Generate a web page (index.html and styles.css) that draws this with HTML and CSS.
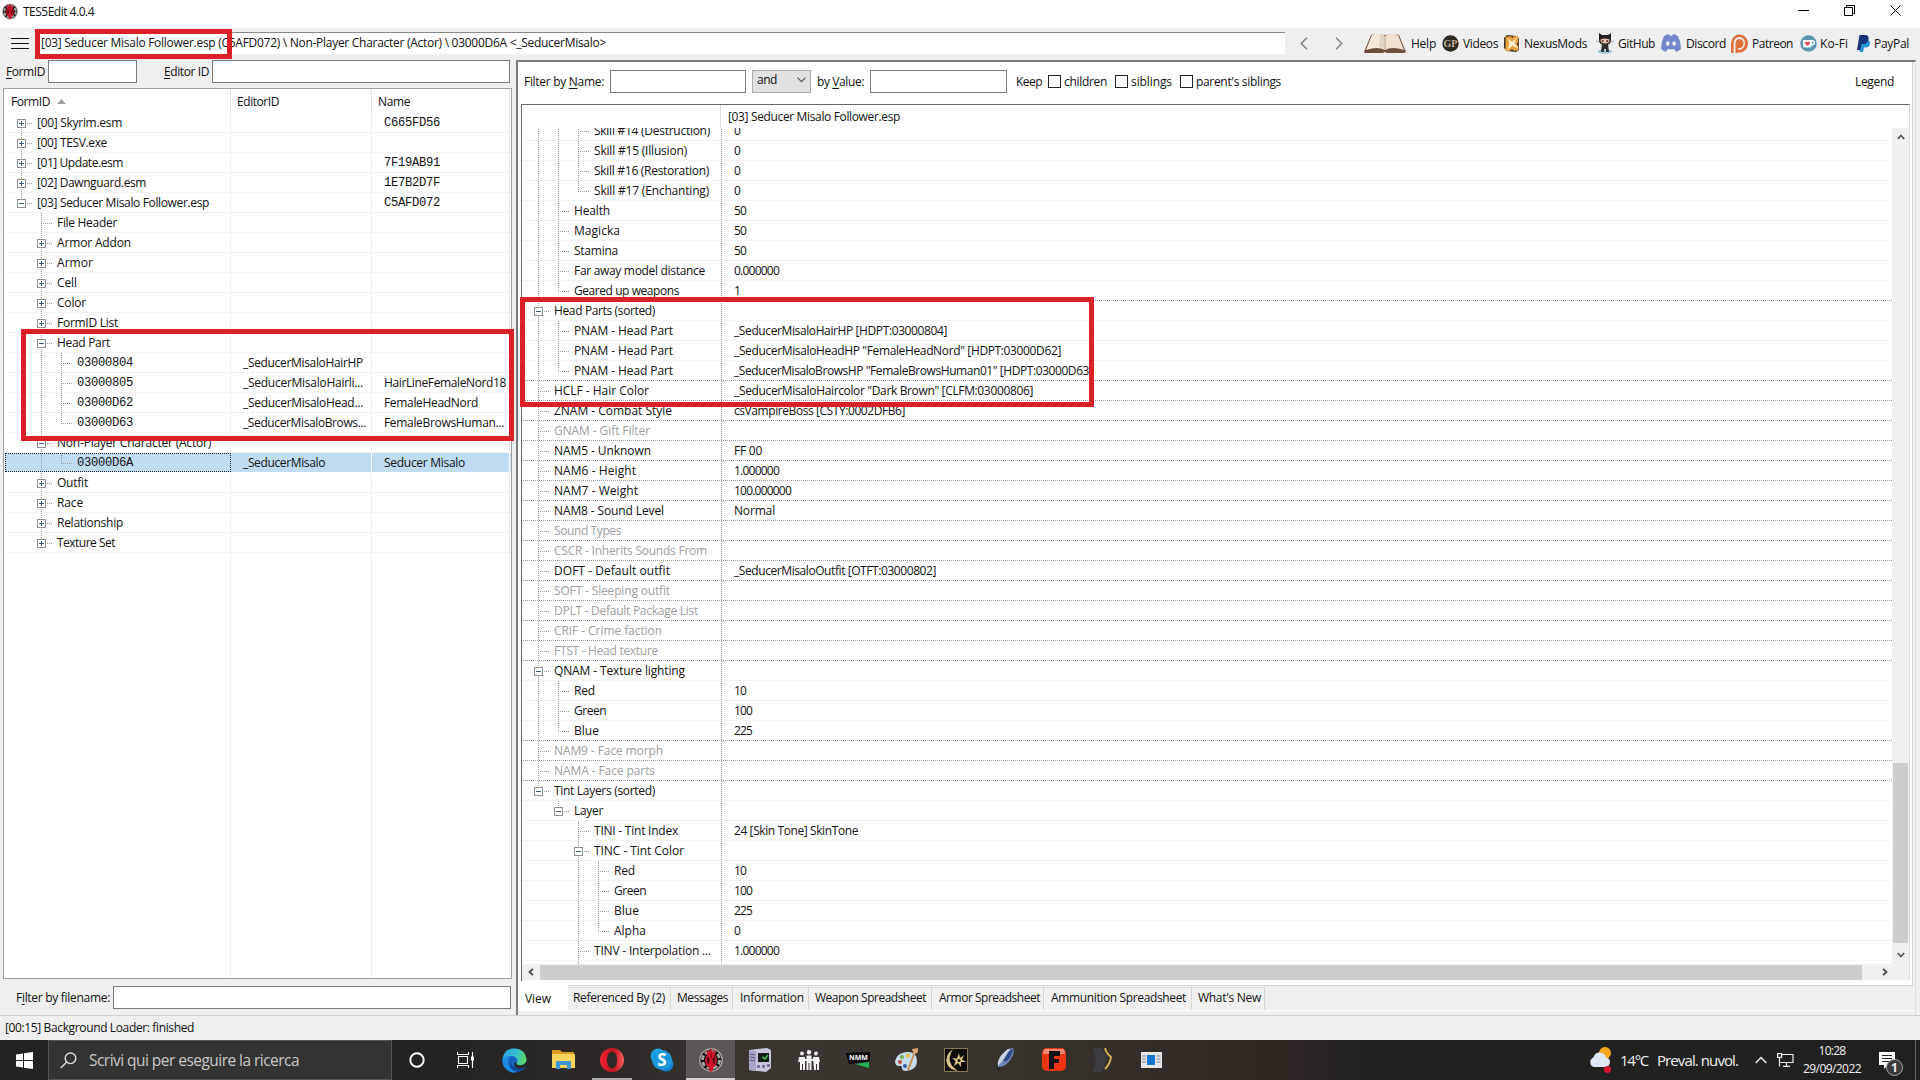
FILE: index.html
```html
<!DOCTYPE html>
<html lang="en">
<head>
<meta charset="utf-8">
<title>TES5Edit 4.0.4</title>
<link rel="stylesheet" href="styles.css">
</head>
<body>
<div class="window">
  <header class="titlebar">
    <svg class="app-icon" width="16" height="17" viewBox="0 0 24 24"><use href="#dragon"/></svg>
    <span data-w="71">TES5Edit 4.0.4</span>
    <div class="win-buttons">
      <svg width="11" height="11"><path d="M0 5.5h11" stroke="#000"/></svg>
      <svg width="11" height="11"><path d="M.5 2.5h8v8h-8zM2.5 2.5v-2h8v8h-2" fill="none" stroke="#000"/></svg>
      <svg width="11" height="11"><path d="M.5 .5l10 10M10.5 .5l-10 10" stroke="#000"/></svg>
    </div>
  </header>

  <div class="toolbar">
    <div class="burger"><i></i><i></i><i></i></div>
    <div class="address"><span data-w="565">[03] Seducer Misalo Follower.esp (C5AFD072) \ Non-Player Character (Actor) \ 03000D6A &lt;_SeducerMisalo&gt;</span></div>
    <div class="nav">
      <svg width="8" height="13"><path d="M7 .8L1.2 6.5 7 12.2" fill="none" stroke="#777" stroke-width="1.3"/></svg>
      <svg width="8" height="13"><path d="M1 .8L6.8 6.5 1 12.2" fill="none" stroke="#777" stroke-width="1.3"/></svg>
    </div>
    <nav class="links">
      <a class="l-help"><svg width="44" height="22" viewBox="0 0 44 22"><path d="M1 20L8 3l3-1 11 1 11-1 3 1 7 17-2 1H24l-2-1-2 1H2z" fill="#6f4f3c"/><path d="M3 18L9 3q7-3 13 1v14q-7-4-19 0z" fill="#f5e9dc"/><path d="M41 18L35 3q-7-3-13 1v14q7-4 19 0z" fill="#f1e0d0"/><path d="M22 4v14" stroke="#b89b83"/><path d="M17 3q4 0 5 2v12q-2-2-6-2z" fill="#d9c3b0" opacity=".6"/></svg><span data-w="25">Help</span></a>
      <a class="l-videos"><svg width="17" height="17" viewBox="0 0 17 17"><circle cx="8.5" cy="8.5" r="8.2" fill="#2e2822"/><text x="8.5" y="12" text-anchor="middle" font-size="10" font-weight="700" fill="#c9b793" class="serif">GP</text></svg><span data-w="35">Videos</span></a>
      <a class="l-nexus"><svg width="16" height="17" viewBox="0 0 16 17"><path d="M3 0L13 1l2 3v11l-3 2-9-1-3-3V3z" fill="#3c3326"/><path d="M1.500 1.500L14 1l.5 14.500-13 .5z" fill="#e9a13b"/><path d="M4 3l4 4 5-5-2.500 6 4 6-6-3.500-5 4.500 2-6.500z" fill="#fdf0d2"/><path d="M7 1l1.500 2L10 1zM0 8l2 1-2 2zM14 7v4l-1.500-2zM6 16l2-2 2 2z" fill="#3c3326"/></svg><span data-w="63">NexusMods</span></a>
      <a class="l-github"><svg width="18" height="22" viewBox="0 0 18 22"><path d="M3 1l3 2h6l3-2v7q0 5-6 5T3 8z" fill="#24211f"/><path d="M4.500 7.500q4.500-2 9 0 .5 4-4.500 4t-4.500-4z" fill="#e8c3ab"/><path d="M0 9l4 1M18 9l-4 1" stroke="#777" stroke-width=".6"/><ellipse cx="9" cy="19.500" rx="7" ry="2.300" fill="#9cc7dd"/><path d="M6 12h6l1 8h-3v-3H8v3H5z" fill="#33302e"/><circle cx="6.700" cy="9" r="1" fill="#5b3228"/><circle cx="11.300" cy="9" r="1" fill="#5b3228"/></svg><span data-w="37">GitHub</span></a>
      <a class="l-discord"><svg width="20" height="18" viewBox="0 0 20 16" preserveAspectRatio="none"><path d="M3 2Q5 .5 8 0l.7 1.500h2.600L12 0q3 .5 5 2 3 5 3 11-2 2-5 3l-1.500-2.500h-7L5 16q-3-1-5-3Q0 7 3 2z" fill="#7487cb"/><ellipse cx="6.800" cy="8.500" rx="1.800" ry="2" fill="#efefef"/><ellipse cx="13.200" cy="8.500" rx="1.800" ry="2" fill="#efefef"/></svg><span data-w="40">Discord</span></a>
      <a class="l-patreon"><svg width="17" height="19" viewBox="0 0 17 17" preserveAspectRatio="none"><path d="M0 17V8a8.500 8 0 1 1 8.500 8.500q-2 0-3.500-.8v-2.500Q6.500 14 8.500 14A5.700 5.700 0 1 0 2.600 8v9z" fill="#e0703a"/><path d="M4.500 17V8.500a4 4 0 1 1 4 4q-1 0-1.500-.3V17z" fill="#e0703a"/></svg><span data-w="41">Patreon</span></a>
      <a class="l-kofi"><svg width="17" height="17" viewBox="0 0 17 17"><circle cx="8.500" cy="8.500" r="8.300" fill="#5a96b0"/><path d="M3 5h9q3 0 3 2.700T12 10.500q-.5 2-2 2H5q-2 0-2-2z" fill="#fff"/><path d="M12 6.500v2.500q1.500 0 1.500-1.200T12 6.500z" fill="#5a96b0"/><path d="M7.500 11L5 8.300Q4.800 6.500 6.300 6.400q.8 0 1.200.8.500-.8 1.300-.8 1.500.2 1.200 1.900z" fill="#e9474b"/></svg><span data-w="28">Ko-Fi</span></a>
      <a class="l-paypal"><svg width="13" height="17" viewBox="0 0 13 17"><path d="M4 5h6q3 0 3 3 0 4.500-5 4.500H7L6 17H2.500z" fill="#2297d8"/><path d="M2.500 0H8q4 0 3.600 4Q11 9 6 9H4.500l-1 6H0z" fill="#18337d"/></svg><span data-w="35">PayPal</span></a>
    </nav>
  </div>

  <main class="main">
    <section class="left">
      <div class="id-filters">
        <label data-w="39"><u>F</u>ormID</label><div class="input in-form"></div>
        <label class="lab-editor" data-w="45"><u>E</u>ditor ID</label><div class="input in-editor"></div>
      </div>
      <div class="nav-panel">
        <div class="nav-head">
          <div class="c1"><span data-w="39">FormID</span><svg width="9" height="5"><path d="M0 5L4.500 0 9 5z" fill="#a0a0a0"/></svg></div>
          <div class="c2"><span data-w="42">EditorID</span></div>
          <div class="c3"><span data-w="32">Name</span></div>
        </div>
        <div class="nav-body" id="nav"></div>
      </div>
      <div class="file-filter"><label data-w="94">F<u>i</u>lter by filename:</label><div class="input in-file"></div></div>
    </section>

    <section class="right">
      <div class="pane">
        <div class="view-filter">
          <label data-w="80">Filter by <u>N</u>ame:</label><div class="input in-name"></div>
          <div class="select"><span data-w="20">and</span><svg width="9" height="6"><path d="M.5 .7l4 4 4-4" fill="none" stroke="#555" stroke-width="1.200"/></svg></div>
          <label data-w="47">by <u>V</u>alue:</label><div class="input in-value"></div>
          <label class="keep" data-w="26">Keep</label>
          <i class="check"></i><label data-w="43">children</label>
          <i class="check"></i><label data-w="41">siblings</label>
          <i class="check"></i><label data-w="85">parent's siblings</label>
          <label class="legend" data-w="39">Legend</label>
        </div>
        <div class="grid">
          <div class="grid-head"><div class="g1"></div><div class="g2"><span data-w="172">[03] Seducer Misalo Follower.esp</span></div></div>
          <div class="grid-main">
            <div class="grid-body"><div id="view"></div></div>
            <div class="vscroll">
              <svg width="8" height="6"><path d="M.8 5L4 1.500 7.200 5" fill="none" stroke="#505050" stroke-width="1.700"/></svg>
              <div class="vthumb"></div>
              <svg width="8" height="6"><path d="M.8 1L4 4.500 7.200 1" fill="none" stroke="#505050" stroke-width="1.700"/></svg>
            </div>
          </div>
          <div class="hscroll">
            <svg width="6" height="8"><path d="M5 .8L1.500 4 5 7.200" fill="none" stroke="#404040" stroke-width="1.700"/></svg>
            <div class="hthumb"></div>
            <svg width="6" height="8"><path d="M1 .8L4.500 4 1 7.200" fill="none" stroke="#404040" stroke-width="1.700"/></svg>
          </div>
        </div>
      </div>
      <div class="tabs">
        <div class="tab t-view"><span data-w="26">View</span></div>
        <div class="tab t-ref"><span data-w="92">Referenced By (2)</span></div>
        <div class="tab t-msg"><span data-w="51">Messages</span></div>
        <div class="tab t-info"><span data-w="64">Information</span></div>
        <div class="tab t-weap"><span data-w="111">Weapon Spreadsheet</span></div>
        <div class="tab t-arm"><span data-w="101">Armor Spreadsheet</span></div>
        <div class="tab t-ammo"><span data-w="135">Ammunition Spreadsheet</span></div>
        <div class="tab t-new"><span data-w="63">What's New</span></div>
      </div>
    </section>
  </main>

  <footer class="status"><span data-w="189">[00:15] Background Loader: finished</span></footer>
</div>

<div class="taskbar">
  <div class="start"><svg width="17" height="17" viewBox="0 0 17 17"><path d="M0 2.400L7 1.400V8H0zM8 1.200L17 0v8H8zM0 9h7v6.600L0 14.600zM8 9h9v8L8 15.800z" fill="#fff"/></svg></div>
  <div class="search"><svg width="17" height="17" viewBox="0 0 17 17"><circle cx="10.500" cy="6.300" r="5.300" fill="none" stroke="#ddd" stroke-width="1.400"/><path d="M6.700 10L.8 16" stroke="#ddd" stroke-width="1.400"/></svg><span data-w="210">Scrivi qui per eseguire la ricerca</span></div>
  <div class="apps">
    <div class="app"><svg width="16" height="16"><circle cx="8" cy="8" r="6.700" fill="none" stroke="#fff" stroke-width="1.900"/></svg></div>
    <div class="app"><svg width="17" height="16"><path d="M.5 0v3M.5 13v3M11.500 0v3M11.500 13v3M.5 2.500h11M.5 13.500h11M1.500 4.500h9v7h-9zM15.500 0v16" fill="none" stroke="#fff" stroke-width="1.100"/><path d="M14 4.500h3v4h-3z" fill="#fff"/></svg></div>
    <div class="app"><svg width="25" height="25" viewBox="0 0 25 25"><defs><linearGradient id="eg" x1="0" x2="1" y1=".3" y2=".5"><stop offset="0" stop-color="#2b9fe6"/><stop offset=".6" stop-color="#35c3c8"/><stop offset="1" stop-color="#62d85a"/></linearGradient></defs><circle cx="12.500" cy="12.500" r="12" fill="#1464c0"/><path d="M.6 11Q2 .5 12.500.5 23 .6 24.500 11q0 6-6.500 6.200-4 0-3.500-2 1.500-2 .5-4Q13 7.500 9 8 3 8.500.6 14z" fill="url(#eg)"/><path d="M9 8Q4 12 7 18q3 5 9 5.800Q10 26 5 22 0 18 .6 12 3 8 9 8z" fill="#1b8be0"/><path d="M10 10q-3 6 2 9 5 2 11-1l1 1-3 3-5 2Q8 22 8 16q0-4 2-6z" fill="#10489a"/><path d="M14.500 15.200q-.5 2 3.500 2 5 0 6.400-4.200.8 4-1.400 6-6 3-9.500 0-2-2-.5-5 1 .2 1.500 1.200z" fill="#2a2a28"/></svg></div>
    <div class="app"><svg width="23" height="20" viewBox="0 0 23 20"><path d="M0 1q0-1 1-1h7l2 2h12v5H0z" fill="#d99a1e"/><path d="M0 4h22q1 0 1 1v13H0z" fill="#fbd45e"/><path d="M4 19v-7q0-1 1-1h13q1 0 1 1v7h-4v-4H8v4z" fill="#3f94d2"/></svg></div>
    <div class="app open"><svg width="24" height="24" viewBox="0 0 24 24"><defs><linearGradient id="og" x1="0" x2="1"><stop offset="0" stop-color="#ef2230"/><stop offset=".6" stop-color="#c51522"/><stop offset="1" stop-color="#f5605f"/></linearGradient></defs><path d="M12 0a12 12 0 1 0 0 24 12 12 0 1 0 0-24zm0 3.500c3 0 5 4 5 8.500s-2 8.500-5 8.500-5-4-5-8.500 2-8.500 5-8.500z" fill="url(#og)" fill-rule="evenodd"/></svg></div>
    <div class="app"><svg width="24" height="24" viewBox="0 0 24 24"><circle cx="8" cy="8" r="7.500" fill="#1da1e2"/><circle cx="16" cy="16" r="7.500" fill="#1583cf"/><circle cx="12" cy="12" r="10" fill="#1a98dc"/><text x="12" y="18" text-anchor="middle" font-size="17" font-weight="700" fill="#fff">S</text></svg></div>
    <div class="app active"><svg width="24" height="24" viewBox="0 0 24 24"><g id="dragon"><circle cx="12" cy="12" r="11.200" fill="#15120f" stroke="#b9b4b1" stroke-width="1.200"/><circle cx="12" cy="12" r="8.600" fill="none" stroke="#a8a4a2" stroke-width="2.800" stroke-dasharray="4.500 2.250"/><path d="M12 0l1.500 4 3-2-.5 5 2 4-1 6-2.500 2-1 4-1.500 1-1.500-1-1-4L7 17l-1-6 2-4-.5-5 3 2z" fill="#d0142c"/><path d="M8 9l2.500 2L9 16zM16 9l-2.500 2 1.500 5zM12 5v5" fill="#4b0710" stroke="#4b0710" stroke-width=".6"/></g></svg></div>
    <div class="app"><svg width="24" height="24" viewBox="0 0 24 24"><path d="M1 2L19 0l4 2v18l-5 4-17-2z" fill="#c9c6e0"/><path d="M1 2l7 1v20l-7-1z" fill="#a9a6ca"/><path d="M2 6l5 1M2 9l5 1M2 12l5 1" stroke="#55506f"/><path d="M10 5h11v9H10z" fill="#152018"/><path d="M14 9l3 2 3-4" stroke="#48c34c" fill="none" stroke-width="1.500"/><path d="M9 17h3v3H9zM14 17h3v3h-3zM19 16h3v3h-3z" fill="#77739a"/></svg></div>
    <div class="app"><svg width="22" height="20" viewBox="0 0 22 20"><g fill="#f2f2f2"><circle cx="4" cy="3.500" r="2"/><circle cx="11" cy="2.300" r="2.200"/><circle cx="18" cy="3.500" r="2"/><path d="M1 7h6v13H5v-6H4v6H2v-8H0zM8.500 5.500h5V20h-2v-7h-1v7h-2zM15 7h6l1 5h-1v8h-2v-6h-1v6h-2zM6 9h3v2H6zM13 9h3v2h-3z"/></g></svg></div>
    <div class="app"><svg width="24" height="17" viewBox="0 0 24 17"><path d="M0 1l24-1v9l-21 3z" fill="#050505"/><path d="M9 12l14-2v6z" fill="#20b454"/><text x="12.500" y="8" text-anchor="middle" font-size="7" font-weight="700" fill="#fff">NMM</text></svg></div>
    <div class="app"><svg width="24" height="24" viewBox="0 0 24 24"><path d="M11 4Q22 3 22 13q0 9-11 10-4 0-4-3 0-3-3-2-4 0-4-5Q2 5 11 4z" fill="#c6dcea"/><circle cx="5" cy="14" r="2" fill="#c34a3c"/><circle cx="7" cy="9" r="2" fill="#72b04a"/><circle cx="13" cy="7.500" r="2" fill="#e6bd3e"/><circle cx="10" cy="18" r="2" fill="#375ea6"/><path d="M13 22l6-16" stroke="#c98c49" stroke-width="2"/><path d="M17 1l6-1 0 4-4 3z" fill="#d8a572"/></svg></div>
    <div class="app"><svg width="24" height="24" viewBox="0 0 24 24"><path d="M.5 .5h23v23H.5z" fill="#0c0a07" stroke="#8b7a50"/><path d="M9 1Q0 8 3 16q3 6 11 7Q5 17 5.500 10q1-5 3.500-9z" fill="#d9c486"/><path d="M15 5l1 5 4-3-2 4.500 4 2.500-5 0 0 5-3-4-4 3 1.500-5L8 10l5 .5z" fill="#d9c486"/><circle cx="15" cy="12.500" r="1.500" fill="#0c0a07"/></svg></div>
    <div class="app"><svg width="20" height="24" viewBox="0 0 20 24"><path d="M3 19L1 23l5-2z" fill="#222"/><path d="M3 19Q1 10 13 1l5-1q2 4-1 9-5 10-14 10z" fill="#6e87b8"/><path d="M8 12q3-7 9-11l1 1q-2 9-8 12z" fill="#2f4b8b"/><path d="M3 18q6-6 12-17l-2 0q-9 7-10 13z" fill="#c9d3e3"/></svg></div>
    <div class="app"><svg width="24" height="24" viewBox="0 0 24 24"><rect width="24" height="23" rx="5" fill="#ee3512"/><path d="M3 1h18q2 1 2 5H1q0-4 2-5z" fill="#f58b76"/><path d="M7 3h11v5h-6v3h5v4h-5v6H7z" fill="#111"/></svg></div>
    <div class="app"><svg width="24" height="24" viewBox="0 0 24 24"><path d="M2 0h9l5 9-5 15H2l3-12z" fill="#3c3d40"/><path d="M14 0q1 5 6 9-1 7-6 12" fill="none" stroke="#d9b356" stroke-width="1.800"/></svg></div>
    <div class="app"><svg width="21" height="16" viewBox="0 0 21 16"><path d="M0 0h21v16H0z" fill="#e4e6e8"/><path d="M6 3h8v10H6z" fill="#1177d1"/><path d="M1 4h4M1 7h4M1 10h4M15.500 4h4M15.500 7h4M15.500 10h4" stroke="#7e868f"/></svg></div>
  </div>
  <div class="tray">
    <svg class="weather" width="23" height="27" viewBox="0 0 23 27"><circle cx="16" cy="6" r="6" fill="#f6a81c"/><path d="M5 20a5 5 0 0 1-.5-9.500Q6 5 11 5.500q5 .5 6 5 4 .5 4 4.800-.5 4.700-5 4.700z" fill="#dfe7f7"/><circle cx="18.500" cy="22.500" r="3.600" fill="#d3152f"/></svg>
    <span class="temp" data-w="28">14°C</span><span class="cond" data-w="81">Preval. nuvol.</span>
    <svg class="chev" width="12" height="8"><path d="M.7 7L6 1.500 11.300 7" fill="none" stroke="#eee" stroke-width="1.400"/></svg>
    <svg class="net" width="17" height="14" viewBox="0 0 17 14"><path d="M5 1.500h11v8H3.500M9.500 10v3M6 13.300h7M.6.600h4v3.800h-4zM2.500 4.500v9" fill="none" stroke="#eee" stroke-width="1.200"/></svg>
    <div class="clock"><span data-w="27">10:28</span><span data-w="58">29/09/2022</span></div>
    <div class="note"><svg width="16" height="17" viewBox="0 0 16 17"><path d="M0 0h16v13H9l-4 4v-4H0z" fill="#fff"/><path d="M3 3.500h10M3 6.500h10M3 9.500h7" stroke="#222"/></svg><b class="badge">1</b></div>
    <i class="peek"></i>
  </div>
</div>

<div class="mark m-title"></div>
<div class="mark m-tree"></div>
<div class="mark m-view"></div>
<script src="app.js"></script>
</body>
</html>
```
FILE: styles.css
```css
* { box-sizing: border-box; }
body {
  margin: 0;
  width: 1920px;
  height: 1080px;
  overflow: hidden;
  position: relative;
  font: 12px/20px "Open Sans", "Noto Sans", sans-serif;
  color: #111;
  background: #efefef;
}
svg { display: block; flex: none; }
svg text { font-family: "Open Sans", sans-serif; }
svg text.serif { font-family: "Liberation Serif", serif; }
span, label { white-space: nowrap; display: block; flex: none; width: max-content; }
u { text-underline-offset: 2px; text-decoration-thickness: 1px; }

.window { height: 1040px; display: flex; flex-direction: column; }
.titlebar { height: 28px; flex: none; background: #fff; display: flex; align-items: flex-start; padding: 3px 19px 0 2px; }
.titlebar span { margin-left: 5px; line-height: 17px; }
.win-buttons { margin-left: auto; display: flex; gap: 35px; padding-top: 2px; }

.toolbar { height: 32px; flex: none; display: flex; padding-left: 11px; }
.burger { width: 18px; padding-top: 10px; display: flex; flex-direction: column; gap: 4px; }
.burger i { height: 1px; background: #111; }
.address { width: 1247px; height: 22px; margin: 4px 0 0 9px; background: #fff; border-top: 1px solid #8a8a8a; padding-left: 3px; line-height: 19px; }
.nav { display: flex; gap: 27px; margin-left: 15px; padding-top: 9px; }
.links { display: flex; height: 30px; align-items: center; margin-left: 20px; }
.links a { display: flex; align-items: center; }
.links span { line-height: 22px; padding-top: 1px; }
.l-help { gap: 4px; width: 79px; }
.l-videos { gap: 4px; width: 62px; }
.l-nexus { gap: 4px; width: 92px; }
.l-github { gap: 4px; width: 65px; }
.l-discord { gap: 5px; width: 70px; }
.l-patreon { gap: 4px; width: 69px; }
.l-kofi { gap: 3px; width: 57px; }
.l-paypal { gap: 4px; }

.main { display: flex; height: 955px; flex: none; }
.left { width: 516px; padding: 0 0 0 3px; flex: none; }
.input { background: #fff; border: 1px solid #7a7a7a; height: 23px; flex: none; }
.id-filters { display: flex; height: 28px; line-height: 24px; padding-left: 3px; }
.in-form { width: 89px; margin-left: 3px; }
.lab-editor { margin-left: 27px; }
.in-editor { width: 298px; margin-left: 3px; }
.nav-panel { width: 509px; height: 891px; background: #fff; border: 1px solid #a0a0a0; display: flex; flex-direction: column; }
.nav-head { display: flex; height: 24px; line-height: 26px; flex: none; }
.nav-head > div { border-right: 1px solid #e5e5e5; padding-left: 7px; }
.nav-head .c1 { width: 227px; display: flex; gap: 7px; }
.nav-head .c1 svg { margin-top: 10px; }
.nav-head .c2 { width: 141px; padding-left: 6px; }
.nav-head .c3 { width: 138px; padding-left: 6px; }
.nav-body { flex: 1; overflow: hidden; display: flex; flex-direction: column; }
.nav-body .fill { flex: 1; display: flex; }
.file-filter { display: flex; padding: 7px 0 0 13px; line-height: 24px; }
.in-file { width: 398px; margin-left: 3px; }

.row { display: flex; height: 20px; line-height: 20px; flex: none; }
.cell { display: flex; flex: none; }
.row .lvl { width: 20px; height: 20px; flex: none; display: flex; align-items: center; background-repeat: no-repeat;
  --v: repeating-linear-gradient(180deg, #999 0 1px, transparent 1px 2px);
  --h: repeating-linear-gradient(90deg, #999 0 1px, transparent 1px 2px); }
.lvl.through { background-image: var(--v); background-size: 1px 20px; background-position: 4px 0; }
.lvl.tee { background-image: var(--v), var(--h); background-size: 1px 20px, 12px 1px; background-position: 4px 0, 4px 10px; }
.lvl.last { background-image: var(--v), var(--h); background-size: 1px 10px, 12px 1px; background-position: 4px 0, 4px 10px; }
.lvl.first { background-image: var(--v), var(--h); background-size: 1px 10px, 12px 1px; background-position: 4px 10px, 4px 10px; }
.box { width: 9px; height: 9px; border: 1px solid #919191; margin-top: 1px;
  background: linear-gradient(#3b5a8c, #3b5a8c) center / 5px 1px no-repeat, #fff; }
.box.plus { background: linear-gradient(#3b5a8c, #3b5a8c) center / 5px 1px no-repeat, linear-gradient(#3b5a8c, #3b5a8c) center / 1px 5px no-repeat, #fff; }

.nav-body .row { border-bottom: 1px solid #f3f3f3; }
.nav-body .cell, .nav-body .fill div { border-right: 1px solid #f1f1f1; }
.nav-body .a, .fill .a { width: 227px; padding-left: 13px; }
.nav-body .b, .fill .b { width: 141px; padding-left: 12px; }
.nav-body .c, .fill .c { width: 138px; padding-left: 12px; border-right-color: #e5e5e5; }
.mono { font-family: "Liberation Mono", monospace; font-size: 12.2px; line-height: 20px; letter-spacing: -0.32px; }
.nav-body .row.sel { background: #bfdcf3; border-bottom-color: #fff; margin: 0 0 0 1px; }
.nav-body .row.sel .cell { border-right-color: #fff; }
.nav-body .row.sel .a { width: 226px; padding-left: 11px; border: 1px dotted #222; }
.nav-body .row.sel .lvl { margin-top: -1px; height: 18px; }
.nav-body .row.sel .mono { margin-top: -1px; }

.right { width: 1400px; flex: none; border-left: 2px solid #7b7b7b; border-top: 2px solid #7b7b7b; border-right: 1px solid #ddd; }
.pane { height: 924px; width: 1395px; background: #fff; border-right: 1px solid #d5d5d5; border-bottom: 1px solid #d5d5d5; }
.view-filter { height: 42px; display: flex; align-items: center; padding: 0 18px 4px 6px; }
.in-name { width: 136px; margin-left: 6px; }
.select { width: 59px; height: 23px; margin: 0 6px; background: #e1e1e1; border: 1px solid #adadad; padding: 0 4px 2px; display: flex; align-items: center; justify-content: space-between; }
.in-value { width: 137px; margin-left: 6px; }
.keep { margin-left: 9px; margin-right: 6px; }
.check { width: 13px; height: 13px; border: 1px solid #222; background: #fff; margin-right: 3px; }
label + .check { margin-left: 8px; }
.keep + .check { margin-left: 0; }
.view-filter label { padding-top: 1px; }
.view-filter label.legend { margin-left: auto; }
.grid { margin-left: 3px; width: 1389px; height: 877px; border-left: 1px solid #666; border-top: 1px solid #666; border-right: 1px solid #ddd; }
.grid-head { display: flex; height: 23px; line-height: 24px; }
.g1 { width: 199px; border-right: 1px solid #ddd; }
.g2 { padding-left: 7px; }
.grid-main { display: flex; height: 836px; }
.grid-body { width: 1372px; height: 836px; overflow: hidden; padding-left: 1px; }
#view { margin-top: -7px; }
#view .row { border-bottom: 1px solid #f3f3f3; }
#view .row.rule { border-bottom: 0; background: repeating-linear-gradient(90deg, #999 0 1px, transparent 1px 2px) 0 19px / 100% 1px no-repeat; }
#view .a { width: 198px; padding-left: 11px; }
#view .b { flex: 1; padding-left: 13px; background: repeating-linear-gradient(180deg, #999 0 1px, transparent 1px 2px) 0 0 / 1px 100% no-repeat; }
#view .dim { color: #a0a0a0; }
.vscroll { width: 17px; background: #f0f0f0; display: flex; flex-direction: column; align-items: center; padding-top: 6px; }
.vthumb { width: 15px; height: 180px; margin: 623px 0 9px; background: #cdcdcd; }
.hscroll { height: 16px; background: #f0f0f0; display: flex; align-items: center; padding-left: 6px; }
.hthumb { width: 1322px; height: 15px; background: #cdcdcd; margin: 0 20px 0 6px; }

.tabs { display: flex; height: 25px; border-bottom: 1px solid #fff; align-items: flex-start; }
.tab { height: 23px; margin-top: 1px; border-right: 1px solid #d5d5d5; border-top: 1px solid #ddd; padding-left: 6px; line-height: 19px; background: #f1f1f1; flex: none; }
.t-view { width: 50px; height: 25px; margin-top: -1px; background: #fff; border: 0; padding-left: 7px; line-height: 28px; }
.t-ref { width: 103px; padding-left: 5px; }
.t-msg { width: 62px; }
.t-info { width: 76px; padding-left: 7px; }
.t-weap { width: 123px; }
.t-arm { width: 112px; padding-left: 7px; }
.t-ammo { width: 148px; padding-left: 7px; }
.t-new { width: 73px; }

.status { height: 25px; border-top: 1px solid #cfcfcf; padding-left: 5px; line-height: 23px; }

.taskbar { height: 40px; display: flex; color: #f0f0f0; font-size: 15px;
  background: linear-gradient(90deg, #232321 0, #232321 420px, #2d2a26 620px, #3a352f 740px, #38332d 1000px, #332b26 1180px, #2f2622 1290px, #22231f 1360px, #20211e 1920px); }
.start { width: 48px; padding: 12px 0 0 16px; }
.search { width: 344px; background: #333332; border: 1px solid #555; display: flex; align-items: center; padding-left: 11px; gap: 12px; color: #c9c9c9; font-size: 15.5px; }
.apps { display: flex; }
.app { width: 49px; height: 40px; display: flex; align-items: center; justify-content: center; }
.app.open { border-bottom: 2px solid #aaa; width: 40px; margin: 0 5px 0 4px; padding-top: 2px; }
.app.active { background: #5b5854; border-bottom: 2px solid #d0cfce; padding-top: 2px; }
.tray { display: flex; margin-left: auto; align-items: center; }
.cond { margin-left: 9px; }
.temp { margin-left: 8px; }
.chev { margin-left: 17px; }
.net { margin-left: 10px; }
.clock { width: 58px; margin-left: 9px; font-size: 12px; line-height: 18px; display: flex; flex-direction: column; align-items: center; }
.note { width: 36px; margin-left: 18px; position: relative; }
.badge { position: absolute; left: 7px; top: 7px; width: 17px; height: 17px; border-radius: 50%; border: 1px solid #aaa; background: #3a3a3a; font-size: 12px; line-height: 15px; text-align: center; }
.peek { width: 1px; height: 40px; background: #666; margin-right: 4px; }

.mark { position: absolute; border: 5px solid #dc2028; }
.m-title { left: 35px; top: 29px; width: 197px; height: 30px; }
.m-tree { left: 21px; top: 329px; width: 493px; height: 112px; }
.m-view { left: 520px; top: 297px; width: 574px; height: 110px; }
```
FILE: app.js
```js
// Guide codes, one per tree level: '|' through, ' ' empty, 'T' tee, 'L' last child, 'F' first root.
const GUIDE = { '|': 'through', ' ': '', 'T': 'tee', 'L': 'last', 'F': 'first' };

const NAV = [
  ['F', '+', '[00] Skyrim.esm', '', 'C665FD56'],
  ['T', '+', '[00] TESV.exe', '', ''],
  ['T', '+', '[01] Update.esm', '', '7F19AB91'],
  ['T', '+', '[02] Dawnguard.esm', '', '1E7B2D7F'],
  ['L', '-', '[03] Seducer Misalo Follower.esp', '', 'C5AFD072'],
  [' T', '', 'File Header', '', ''],
  [' T', '+', 'Armor Addon', '', ''],
  [' T', '+', 'Armor', '', ''],
  [' T', '+', 'Cell', '', ''],
  [' T', '+', 'Color', '', ''],
  [' T', '+', 'FormID List', '', ''],
  [' T', '-', 'Head Part', '', ''],
  [' |T', '', '03000804', '_SeducerMisaloHairHP', ''],
  [' |T', '', '03000805', '_SeducerMisaloHairli...', 'HairLineFemaleNord18'],
  [' |T', '', '03000D62', '_SeducerMisaloHead...', 'FemaleHeadNord'],
  [' |L', '', '03000D63', '_SeducerMisaloBrows...', 'FemaleBrowsHuman...'],
  [' T', '-', 'Non-Player Character (Actor)', '', ''],
  [' |L', '', '03000D6A', '_SeducerMisalo', 'Seducer Misalo', 'sel'],
  [' T', '+', 'Outfit', '', ''],
  [' T', '+', 'Race', '', ''],
  [' T', '+', 'Relationship', '', ''],
  [' L', '+', 'Texture Set', '', '']
];

const VIEW = [
  ['||T', '', 'Skill #14 (Destruction)', '0'],
  ['||T', '', 'Skill #15 (Illusion)', '0'],
  ['||T', '', 'Skill #16 (Restoration)', '0'],
  ['||L', '', 'Skill #17 (Enchanting)', '0'],
  ['|T', '', 'Health', '50'],
  ['|T', '', 'Magicka', '50'],
  ['|T', '', 'Stamina', '50'],
  ['|T', '', 'Far away model distance', '0.000000'],
  ['|L', '', 'Geared up weapons', '1'],
  ['T', '-', 'Head Parts (sorted)', ''],
  ['|T', '', 'PNAM - Head Part', '_SeducerMisaloHairHP [HDPT:03000804]'],
  ['|T', '', 'PNAM - Head Part', '_SeducerMisaloHeadHP "FemaleHeadNord" [HDPT:03000D62]'],
  ['|L', '', 'PNAM - Head Part', '_SeducerMisaloBrowsHP "FemaleBrowsHuman01" [HDPT:03000D63'],
  ['T', '', 'HCLF - Hair Color', '_SeducerMisaloHaircolor "Dark Brown" [CLFM:03000806]'],
  ['T', '', 'ZNAM - Combat Style', 'csVampireBoss [CSTY:0002DFB6]'],
  ['T', '', 'GNAM - Gift Filter', '', 'dim'],
  ['T', '', 'NAM5 - Unknown', 'FF 00'],
  ['T', '', 'NAM6 - Height', '1.000000'],
  ['T', '', 'NAM7 - Weight', '100.000000'],
  ['T', '', 'NAM8 - Sound Level', 'Normal'],
  ['T', '', 'Sound Types', '', 'dim'],
  ['T', '', 'CSCR - Inherits Sounds From', '', 'dim'],
  ['T', '', 'DOFT - Default outfit', '_SeducerMisaloOutfit [OTFT:03000802]'],
  ['T', '', 'SOFT - Sleeping outfit', '', 'dim'],
  ['T', '', 'DPLT - Default Package List', '', 'dim'],
  ['T', '', 'CRIF - Crime faction', '', 'dim'],
  ['T', '', 'FTST - Head texture', '', 'dim'],
  ['T', '-', 'QNAM - Texture lighting', ''],
  ['|T', '', 'Red', '10'],
  ['|T', '', 'Green', '100'],
  ['|L', '', 'Blue', '225'],
  ['T', '', 'NAM9 - Face morph', '', 'dim'],
  ['T', '', 'NAMA - Face parts', '', 'dim'],
  ['L', '-', 'Tint Layers (sorted)', ''],
  [' L', '-', 'Layer', ''],
  ['  T', '', 'TINI - Tint Index', '24 [Skin Tone] SkinTone'],
  ['  T', '-', 'TINC - Tint Color', ''],
  ['  |T', '', 'Red', '10'],
  ['  |T', '', 'Green', '100'],
  ['  |T', '', 'Blue', '225'],
  ['  |L', '', 'Alpha', '0'],
  ['  T', '', 'TINV - Interpolation ...', '1.000000'],
  ['  |', '', '', '']
];

// Advance widths of the tree captions in the UI font's 12px metrics.
const WIDTHS = {
  '[00] Skyrim.esm': 85, '[00] TESV.exe': 70, '[01] Update.esm': 86, '[02] Dawnguard.esm': 109,
  '[03] Seducer Misalo Follower.esp': 172, 'File Header': 60, 'Armor Addon': 74, 'Armor': 36,
  'Cell': 20, 'Color': 29, 'FormID List': 61, 'Head Part': 53, '_SeducerMisaloHairHP': 120,
  '_SeducerMisaloHairli...': 120, '_SeducerMisaloHead...': 120, '_SeducerMisaloBrows...': 123,
  'HairLineFemaleNord18': 122, 'FemaleHeadNord': 94, 'FemaleBrowsHuman...': 120,
  'Non-Player Character (Actor)': 154, '_SeducerMisalo': 82, 'Seducer Misalo': 81,
  'Outfit': 31, 'Race': 26, 'Relationship': 66, 'Texture Set': 58,
  'Skill #14 (Destruction)': 116, 'Skill #15 (Illusion)': 93, 'Skill #16 (Restoration)': 115,
  'Skill #17 (Enchanting)': 115, 'Health': 36, 'Magicka': 46, 'Stamina': 44,
  'Far away model distance': 131, 'Geared up weapons': 105, '50': 12, '0.000000': 45,
  'Head Parts (sorted)': 101, 'PNAM - Head Part': 99, 'HCLF - Hair Color': 95,
  'ZNAM - Combat Style': 118, 'GNAM - Gift Filter': 96, 'NAM5 - Unknown': 97,
  'NAM6 - Height': 82, 'NAM7 - Weight': 84, 'NAM8 - Sound Level': 110, 'Sound Types': 67,
  'CSCR - Inherits Sounds From': 153, 'DOFT - Default outfit': 116, 'SOFT - Sleeping outfit': 116,
  'DPLT - Default Package List': 144, 'CRIF - Crime faction': 108, 'FTST - Head texture': 104,
  'QNAM - Texture lighting': 131, 'Red': 21, 'Green': 32, 'Blue': 25, '10': 12, '100': 18,
  '225': 18, 'NAM9 - Face morph': 109, 'NAMA - Face parts': 101, 'Tint Layers (sorted)': 101,
  'Layer': 29, 'TINI - Tint Index': 84, 'TINC - Tint Color': 90, 'Alpha': 32,
  'TINV - Interpolation ...': 117, '24 [Skin Tone] SkinTone': 124,
  '_SeducerMisaloHairHP [HDPT:03000804]': 213,
  '_SeducerMisaloHeadHP "FemaleHeadNord" [HDPT:03000D62]': 327,
  '_SeducerMisaloBrowsHP "FemaleBrowsHuman01" [HDPT:03000D63': 355,
  '_SeducerMisaloHaircolor "Dark Brown" [CLFM:03000806]': 299,
  'csVampireBoss [CSTY:0002DFB6]': 171, 'FF 00': 28, '1.000000': 45, '100.000000': 57,
  'Normal': 41, '_SeducerMisaloOutfit [OTFT:03000802]': 202
};

function el(tag, cls, text) {
  const e = document.createElement(tag);
  if (cls) e.className = cls;
  if (text) e.textContent = text;
  return e;
}

function textNode(text) {
  const e = el('span', /^[0-9A-F]{8}$/.test(text) ? 'mono' : 'txt', text);
  if (WIDTHS[text]) e.dataset.w = WIDTHS[text];
  return e;
}

function labelCell(guides, box, text) {
  const cell = el('div', 'cell a');
  [...guides].forEach((g, i) => {
    const lvl = el('div', 'lvl ' + GUIDE[g]);
    if (box && i === guides.length - 1) lvl.append(el('i', box === '+' ? 'box plus' : 'box'));
    cell.append(lvl);
  });
  if (text) cell.append(textNode(text));
  return cell;
}

function valueCell(cls, text) {
  const cell = el('div', 'cell ' + cls);
  if (text) cell.append(textNode(text));
  return cell;
}

const nav = document.getElementById('nav');
for (const [guides, box, id, editor, name, cls] of NAV) {
  const row = el('div', 'row ' + (cls || ''));
  row.append(labelCell(guides, box, id), valueCell('b', editor), valueCell('c', name));
  nav.append(row);
}
const fill = el('div', 'fill');
fill.append(el('div', 'a'), el('div', 'b'), el('div', 'c'));
nav.append(fill);

const view = document.getElementById('view');
VIEW.forEach(([guides, box, label, value, cls], i) => {
  const next = VIEW[i + 1];
  const rule = next && next[0].length === 1 ? ' rule' : '';
  const row = el('div', 'row' + rule);
  const name = labelCell(guides, box, label);
  if (cls) name.classList.add(cls);
  row.append(name, valueCell('b', value));
  view.append(row);
});

// Spread each caption over its width in the form layout.
document.querySelectorAll('[data-w]').forEach(e => {
  const want = +e.dataset.w;
  const have = e.getBoundingClientRect().width;
  e.style.letterSpacing = (want - have) / e.textContent.length + 'px';
  e.style.width = want + 'px';
});
```
